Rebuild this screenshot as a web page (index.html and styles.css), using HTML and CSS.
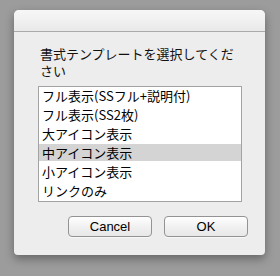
FILE: index.html
```html
<!DOCTYPE html>
<html>
  <head>
    <meta charset="utf-8">
    <title>書式テンプレート</title>
    <link rel="stylesheet" href="styles.css">
  </head>
  <body>
    <div class="sheet">
      <div class="titlebar"></div>
      <div class="content">
        <div class="prompt">書式テンプレートを選択してください</div>
        <div class="list">
          <div class="row">フル表示(SSフル+説明付)</div>
          <div class="row">フル表示(SS2枚)</div>
          <div class="row">大アイコン表示</div>
          <div class="row selected">中アイコン表示</div>
          <div class="row">小アイコン表示</div>
          <div class="row">リンクのみ</div>
        </div>
        <div class="buttons">
          <div class="button">Cancel</div>
          <div class="button">OK</div>
        </div>
      </div>
    </div>
  </body>
</html>
```

FILE: styles.css
```css
body {
  margin: 0;
  padding: 10px 0 0 14px;
  height: 276px;
  box-sizing: border-box;
  background: #9c9c9c;
  font-family: "Liberation Sans", "Noto Sans CJK JP", sans-serif;
  overflow: hidden;
}

.sheet {
  width: 251px;
  height: 245px;
  background: #ededed;
  border-radius: 5px 5px 4px 4px;
  box-shadow: 0 4px 10px rgba(0, 0, 0, 0.35);
}

.titlebar {
  height: 21px;
  border-radius: 5px 5px 0 0;
  background: linear-gradient(#f7f7f7, #e9e9e9);
  border-bottom: 1px solid #a9a9a9;
}

.content {
  padding: 13px 0 0 24px;
}

.prompt {
  width: 200px;
  margin-left: 2px;
  font-family: "Noto Sans CJK JP", sans-serif;
  font-size: 13px;
  line-height: 17px;
  color: #111;
}

.list {
  width: 202px;
  height: 114px;
  margin-top: 7px;
  border: 1px solid #a3a3a3;
  background: #fff;
}

.row {
  height: 17px;
  margin-bottom: 2px;
  padding-left: 3px;
  font-family: "Noto Sans CJK JP", sans-serif;
  font-size: 13px;
  line-height: 17px;
  color: #000;
}

.row.selected {
  background: #d4d4d4;
}

.buttons {
  display: flex;
  gap: 12px;
  margin: 14px 0 0 30px;
}

.button {
  width: 82px;
  height: 19px;
  border: 1px solid #939393;
  border-radius: 4px;
  background: linear-gradient(#ffffff, #f1f1f1 50%, #e8e8e8);
  box-shadow: 0 1px 0 rgba(255, 255, 255, 0.6);
  text-align: center;
  font-size: 13px;
  line-height: 19px;
  color: #000;
}
```
